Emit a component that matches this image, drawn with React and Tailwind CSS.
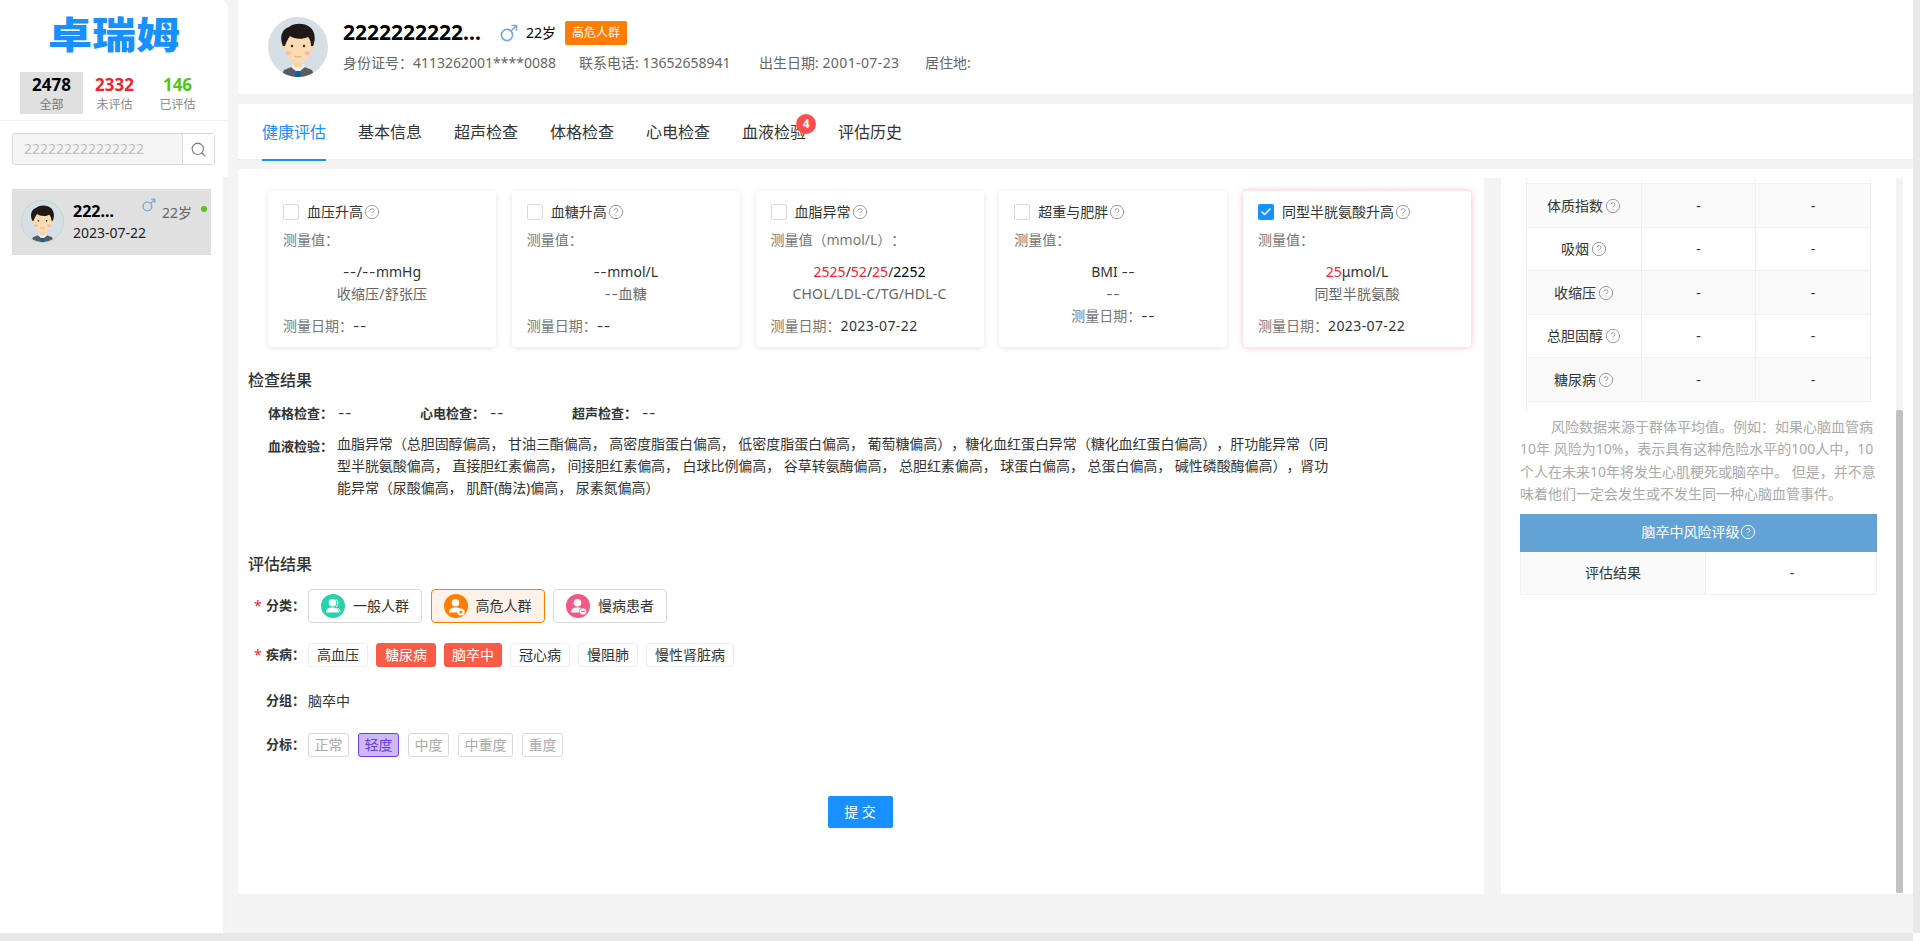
import React from "react";
import { CircleHelp, Search, Check } from "lucide-react";

function Avatar({ size, ring }) {
  const id = "av" + size;
  return (
    <svg width={size} height={size} viewBox="0 0 60 60" className={ring ? "shrink-0 rounded-full border border-[#b5dcc4]" : "shrink-0"}>
      <defs>
        <clipPath id={id}><circle cx="30" cy="30" r="30" /></clipPath>
      </defs>
      <g clipPath={`url(#${id})`}>
        <rect width="60" height="60" fill="#d6dfe5" />
        <path d="M13 60 L16 53 L26 49 H34 L44 53 L47 60 Z" fill="#565c61" />
        <path d="M23 50 L30 56 L37 50 L35 47 H25 Z" fill="#e9f1f6" />
        <path d="M28 54 L32 54 L33 60 L27 60 Z" fill="#0f5ca8" />
        <rect x="26" y="40" width="8" height="10" fill="#f6d3a6" />
        <circle cx="16.5" cy="29" r="3" fill="#f6d3a6" />
        <circle cx="43.5" cy="29" r="3" fill="#f6d3a6" />
        <path d="M17 24 C17 14 43 14 43 24 L43 31 C43 40 36 46 30 46 C24 46 17 40 17 31 Z" fill="#fbdcb2" />
        <path d="M15 29 C11 20 14 12 21 10 C27 5 38 6 43 11 C47 15 48 23 45 29 L43 29 C43 25 42 22 40 20 C34 23 26 22 22 19 C20 22 18 25 17 29 Z" fill="#1f1a18" />
        <circle cx="24" cy="29" r="1.2" fill="#2a2320" />
        <circle cx="36" cy="29" r="1.2" fill="#2a2320" />
        <ellipse cx="20.5" cy="36" rx="3" ry="1.9" fill="#f7b9b0" />
        <ellipse cx="39.5" cy="36" rx="3" ry="1.9" fill="#f7b9b0" />
        <path d="M26.5 39 Q30 41.5 33.5 39" stroke="#e2a27e" strokeWidth="1" fill="none" />
      </g>
    </svg>
  );
}

function Male({ size = 18 }) {
  return (
    <svg width={size} height={size} viewBox="0 0 18 18" fill="none" stroke="#7cabd3" strokeWidth="1.7" className="shrink-0">
      <circle cx="7" cy="11" r="5.6" />
      <path d="M11 7 L16.5 1.5 M11.5 1.5 H16.5 V6.5" />
    </svg>
  );
}

function Help({ className = "text-[#999]", size = 16 }) {
  return <CircleHelp size={size} strokeWidth={1.5} className={"shrink-0 " + className} />;
}

const Dash = () => <span className="font-['Inter',sans-serif] tracking-[0.5px]">--</span>;

function Card({ title, measure, value, sub, date, checked, centerDate }) {
  return (
    <div className={"w-[228px] h-[156px] shrink-0 rounded bg-white pt-[13px] px-[15px] " + (checked ? "shadow-[0_0_6px_rgba(255,120,120,0.5)]" : "shadow-[0_1px_6px_rgba(0,0,0,0.1)]")}>
      <div className="flex items-center h-4">
        {checked ? (
          <span className="w-4 h-4 rounded-[2px] bg-[#1890ff] flex items-center justify-center"><Check size={12} strokeWidth={3} className="text-white" /></span>
        ) : (
          <span className="w-4 h-4 rounded-[2px] border border-[#d9d9d9] bg-white"></span>
        )}
        <span className="ml-2 text-sm text-[#333] whitespace-nowrap">{title}</span>
        <Help className="text-[#999] ml-px" />
      </div>
      <div className="mt-[9px] text-sm leading-[22px] text-[#777] whitespace-nowrap">{measure}</div>
      <div className="mt-[10px] text-sm leading-[22px] text-[#333] text-center whitespace-nowrap">{value}</div>
      <div className="text-sm leading-[22px] text-[#666] text-center whitespace-nowrap tracking-[0.2px]">{sub}</div>
      <div className={"text-sm leading-[22px] text-[#777] whitespace-nowrap " + (centerDate ? "text-center" : "mt-[10px]")}>测量日期：<span className="text-[#333] tracking-[0.4px]">{date}</span></div>
    </div>
  );
}

const R = ({ children }) => <span className="text-[#f5222d]">{children}</span>;

const rows = [
  ["体质指数", "bg-[#fafafa]", "h-[44px]"],
  ["吸烟", "bg-white", "h-[43px]"],
  ["收缩压", "bg-[#fafafa]", "h-[44px]"],
  ["总胆固醇", "bg-white", "h-[43px]"],
  ["糖尿病", "bg-[#fafafa]", "h-[44px]"],
];

function PersonIcon({ bg, badge }) {
  return (
    <svg width="24" height="24" viewBox="0 0 24 24" className="shrink-0">
      <circle cx="12" cy="12" r="12" fill={bg} />
      <circle cx="11.5" cy="8.8" r="3.8" fill="#fff" />
      <path d="M5 18.5 C5 14.5 8 13.5 11.5 13.5 C15 13.5 18 14.5 18 18.5 Z" fill="#fff" />
      {badge === "line" && <path d="M15 5 Q18.5 9 15.5 13 M17 14 L19.5 18" stroke="#fff" strokeWidth="1" fill="none" />}
      {badge === "star" && <g><circle cx="17" cy="18" r="3.6" fill="#fff" /><path d="M17 15.9 L17.7 17.3 L19.2 17.5 L18.1 18.5 L18.4 20 L17 19.3 L15.6 20 L15.9 18.5 L14.8 17.5 L16.3 17.3 Z" fill={bg} /></g>}
      {badge === "minus" && <g><circle cx="17" cy="17.5" r="3.6" fill="#fff" stroke={bg} strokeWidth="0.8" /><path d="M15.2 17.5 H18.8" stroke={bg} strokeWidth="1.2" /></g>}
    </svg>
  );
}

function CatChip({ label, bg, badge, active }) {
  return (
    <div className={"w-[114px] h-[34px] rounded border flex items-center pl-[12px] gap-[8px] text-sm " + (active ? "border-[#ff7d00] bg-[#fff2e8] text-[#333]" : "border-[#d9d9d9] bg-white text-[#333]")}>
      <PersonIcon bg={bg} badge={badge} />
      <span className="whitespace-nowrap">{label}</span>
    </div>
  );
}

function DChip({ label, active, narrow }) {
  return (
    <span className={"h-[24px] rounded-[3px] flex items-center justify-center text-sm whitespace-nowrap border " + (narrow ? "w-[58px] " : "px-2 ") + (active ? "bg-[#f95c45] border-[#f95c45] text-white" : "bg-white border-[#f0f0f0] text-[#333]")}>{label}</span>
  );
}

function GChip({ label, active }) {
  return (
    <span className={"h-[24px] px-[5.5px] rounded-[3px] flex items-center text-sm whitespace-nowrap border " + (active ? "bg-[#cdb9f5] border-[#6b3fd6] text-[#6b3fd6]" : "bg-white border-[#d9d9d9] text-[#aaa]")}>{label}</span>
  );
}

function FormLabel({ star, children }) {
  return (
    <div className="flex items-center w-[60px] pl-[6px] shrink-0">
      <span className="w-[12px] text-[#f5222d] text-sm leading-none">{star ? "*" : ""}</span>
      <span className="text-[13px] font-bold text-[#333] whitespace-nowrap">{children}</span>
    </div>
  );
}

export default function App() {
  return (
    <div className="w-[1920px] h-[941px] overflow-hidden flex flex-col bg-[#f4f4f4] [text-spacing-trim:space-all] font-['Noto_Sans','Noto_Sans_CJK_SC',sans-serif]">
      <div className="flex h-[933px]">
        <aside className="w-[228px] shrink-0 bg-white rounded-tr-lg flex flex-col">
          <div className="h-[72px] flex justify-center pt-[9px]">
            <span className="text-[44px] leading-[48px] font-black text-[#1890ff] whitespace-nowrap scale-y-[0.85]">卓瑞姆</span>
          </div>
          <div className="flex pl-[20px] h-[42px]">
            <div className="w-[63px] bg-[#e0e0e0] flex flex-col items-center pt-[2px]">
              <span className="text-[17px] leading-[21px] font-bold text-black">2478</span>
              <span className="text-xs leading-[20px] text-[#777]">全部</span>
            </div>
            <div className="w-[63px] flex flex-col items-center pt-[2px]">
              <span className="text-[17px] leading-[21px] font-bold text-[#f5222d]">2332</span>
              <span className="text-xs leading-[20px] text-[#888]">未评估</span>
            </div>
            <div className="w-[63px] flex flex-col items-center pt-[2px]">
              <span className="text-[17px] leading-[21px] font-bold text-[#52c41a]">146</span>
              <span className="text-xs leading-[20px] text-[#888]">已评估</span>
            </div>
          </div>
          <div className="mt-[6px] h-px bg-[#f0f0f0]"></div>
          <div className="mt-[12px] ml-[12px] w-[203px] h-[32px] flex rounded-[3px] border border-[#d9d9d9] bg-[#f5f5f5]">
            <div className="flex-1 pl-[11px] text-sm leading-[30px] text-[#bfbfbf]">222222222222222</div>
            <div className="w-[32px] border-l border-[#d9d9d9] bg-white flex items-center justify-center">
              <Search size={17} strokeWidth={1.5} className="text-[#777]" />
            </div>
          </div>
          <div className="mt-[12px] flex-1 flex">
            <div className="w-[223px] pl-[12px] pt-[12px]">
              <div className="w-[199px] h-[66px] bg-[#e0e0e0] relative flex pl-[9px] pt-[11px]">
                <Avatar size={43} ring />
                <div className="ml-[9px] -mt-px flex flex-col">
                  <span className="text-base leading-[24px] font-bold text-black">222...</span>
                  <span className="text-sm leading-[20px] text-[#222]">2023-07-22</span>
                </div>
                <div className="absolute left-[130px] top-[9px]"><Male size={14} /></div>
                <span className="absolute left-[150px] top-[15px] text-sm leading-[18px] text-[#666]">22岁</span>
                <span className="absolute left-[189px] top-[17px] w-[6px] h-[6px] rounded-full bg-[#52c41a]"></span>
              </div>
            </div>
            <div className="w-[5px] bg-[#f3f3f3]"></div>
          </div>
        </aside>

        <main className="ml-[10px] w-[1675px] shrink-0 flex flex-col">
          <header className="h-[94px] bg-white flex items-start pl-[30px] pt-[17px]">
            <Avatar size={60} />
            <div className="ml-[15px]">
              <div className="flex items-center h-[30px] mt-px">
                <span className="text-[21px] font-bold text-black w-[157px] whitespace-nowrap">2222222222...</span>
                <Male size={18} />
                <span className="ml-2 text-sm text-black">22岁</span>
                <span className="ml-[9px] w-[62px] h-[24px] rounded-[2px] bg-[#ff7d00] text-white text-xs flex items-center justify-center">高危人群</span>
              </div>
              <div className="flex text-sm text-[#666] mt-[5px] leading-[20px] whitespace-nowrap">
                <span className="w-[236px]">身份证号：4113262001****0088</span>
                <span className="w-[180px]">联系电话: 13652658941</span>
                <span className="w-[166px]">出生日期: <span className="tracking-[0.4px]">2001-07-23</span></span>
                <span>居住地:</span>
              </div>
            </div>
          </header>

          <nav className="mt-[10px] h-[56px] bg-white border-b border-[#eeeeee] flex pl-[24px] gap-[32px] text-base text-[#333]">
            <div className="h-[57px] w-[64px] border-b-2 border-[#1890ff] text-[#1890ff] leading-[56px] whitespace-nowrap">健康评估</div>
            <div className="leading-[56px] whitespace-nowrap">基本信息</div>
            <div className="leading-[56px] whitespace-nowrap">超声检查</div>
            <div className="leading-[56px] whitespace-nowrap">体格检查</div>
            <div className="leading-[56px] whitespace-nowrap">心电检查</div>
            <div className="relative leading-[56px] whitespace-nowrap">
              血液检验
              <span className="absolute left-[54px] top-[10px] w-[20px] h-[20px] rounded-full bg-[#ff4d4f] text-white text-xs font-bold leading-[20px] text-center">4</span>
            </div>
            <div className="leading-[56px] whitespace-nowrap">评估历史</div>
          </nav>

          <div className="mt-[9px] h-[725px] bg-white pt-[9px] flex">
            <section className="w-[1246px] shrink-0 pt-[13px]">
              <div className="pl-[30px] flex gap-[15.75px]">
                <Card title="血压升高" measure="测量值：" value={<><Dash />/<Dash />mmHg</>} sub="收缩压/舒张压" date={<Dash />} />
                <Card title="血糖升高" measure="测量值：" value={<><Dash />mmol/L</>} sub={<><Dash />血糖</>} date={<Dash />} />
                <Card title="血脂异常" measure="测量值（mmol/L）：" value={<><R>2525</R>/<R>52</R>/<R>25</R>/<span className="text-black">2252</span></>} sub="CHOL/LDL-C/TG/HDL-C" date="2023-07-22" />
                <Card title="超重与肥胖" measure="测量值：" value={<>BMI <Dash /></>} sub={<Dash />} date={<Dash />} centerDate />
                <Card checked title="同型半胱氨酸升高" measure="测量值：" value={<><R>25</R>μmol/L</>} sub="同型半胱氨酸" date="2023-07-22" />
              </div>

              <h2 className="mt-[22px] ml-[10px] text-base leading-[22px] font-medium text-[#333]">检查结果</h2>
              <div className="mt-[11px] ml-[30px] flex leading-[22px]">
                <div className="w-[152px] flex"><span className="w-[70px] text-[13px] leading-[22px] font-bold text-[#333]">体格检查：</span><span className="text-sm leading-[22px] text-[#333]"><Dash /></span></div>
                <div className="w-[152px] flex"><span className="w-[70px] text-[13px] leading-[22px] font-bold text-[#333]">心电检查：</span><span className="text-sm leading-[22px] text-[#333]"><Dash /></span></div>
                <div className="w-[152px] flex"><span className="w-[70px] text-[13px] leading-[22px] font-bold text-[#333]">超声检查：</span><span className="text-sm leading-[22px] text-[#333]"><Dash /></span></div>
              </div>
              <div className="mt-[11px] ml-[30px] flex">
                <span className="w-[69px] shrink-0 text-[13px] font-bold leading-[22px] text-[#333]">血液检验：</span>
                <p className="w-[1000px] -mt-[2px] text-sm leading-[22px] tracking-[-0.05px] text-[#333]">
                  血脂异常（总胆固醇偏高， 甘油三酯偏高， 高密度脂蛋白偏高， 低密度脂蛋白偏高， 葡萄糖偏高），糖化血红蛋白异常（糖化血红蛋白偏高），肝功能异常（同型半胱氨酸偏高， 直接胆红素偏高， 间接胆红素偏高， 白球比例偏高， 谷草转氨酶偏高， 总胆红素偏高， 球蛋白偏高， 总蛋白偏高， 碱性磷酸酶偏高），肾功能异常（尿酸偏高， 肌酐(酶法)偏高， 尿素氮偏高）
                </p>
              </div>

              <h2 className="mt-[54px] ml-[10px] text-base leading-[22px] font-medium text-[#333]">评估结果</h2>
              <div className="mt-[14px] ml-[10px] flex items-center">
                <FormLabel star>分类：</FormLabel>
                <div className="flex gap-[8.5px]">
                  <CatChip label="一般人群" bg="#26d4ab" badge="line" />
                  <CatChip label="高危人群" bg="#ff7d00" badge="star" active />
                  <CatChip label="慢病患者" bg="#f25a85" badge="minus" />
                </div>
              </div>
              <div className="mt-[20px] ml-[10px] flex items-center">
                <FormLabel star>疾病：</FormLabel>
                <div className="flex gap-[8px]">
                  <DChip label="高血压" />
                  <DChip label="糖尿病" active />
                  <DChip label="脑卒中" active narrow />
                  <DChip label="冠心病" />
                  <DChip label="慢阻肺" />
                  <DChip label="慢性肾脏病" />
                </div>
              </div>
              <div className="mt-[22px] ml-[10px] flex items-center h-[24px]">
                <FormLabel>分组：</FormLabel>
                <span className="text-sm text-[#333]">脑卒中</span>
              </div>
              <div className="mt-[20px] ml-[10px] flex items-center">
                <FormLabel>分标：</FormLabel>
                <div className="flex gap-[9px]">
                  <GChip label="正常" />
                  <GChip label="轻度" active />
                  <GChip label="中度" />
                  <GChip label="中重度" />
                  <GChip label="重度" />
                </div>
              </div>
              <div className="mt-[39px] flex justify-center pr-[2px]">
                <button className="w-[65px] h-[32px] rounded-[2px] bg-[#1890ff] text-white text-sm">提 交</button>
              </div>
            </section>

            <div className="w-[17px] shrink-0 bg-[#f4f4f4]"></div>

            <section className="w-[412px] shrink-0 flex">
              <div className="w-[395px] shrink-0">
                <div className="ml-[25px] w-[345px] border-l border-[#f0f0f0] pb-[9px]">
                  <div className="grid grid-cols-[115px_114px_115px] h-[5px] border-b border-[#f0f0f0] box-content">
                    <div className="border-r border-[#f0f0f0]"></div>
                    <div className="border-r border-[#f0f0f0]"></div>
                    <div className="border-r border-[#f0f0f0]"></div>
                  </div>
                  {rows.map(([label, bg, h]) => (
                    <div key={label} className={"grid grid-cols-[115px_114px_115px] border-b border-[#f0f0f0] text-sm text-[#333] " + bg + " " + h}>
                      <div className="border-r border-[#f0f0f0] flex items-center justify-center gap-[2px]">{label}<Help /></div>
                      <div className="border-r border-[#f0f0f0] flex items-center justify-center">-</div>
                      <div className="border-r border-[#f0f0f0] flex items-center justify-center">-</div>
                    </div>
                  ))}
                </div>
                <p className="mt-[5px] ml-[19px] w-[357px] text-sm leading-[22.4px] text-[#aaa] indent-[31px]">
                  风险数据来源于群体平均值。例如：如果心脑血管病10年 风险为10%，表示具有这种危险水平的100人中，10个人在未来10年将发生心肌梗死或脑卒中。 但是，并不意味着他们一定会发生或不发生同一种心脑血管事件。
                </p>
                <div className="mt-[8px] ml-[19px] w-[357px] h-[38px] bg-[#62a2d5] text-white text-sm flex items-center justify-center pb-[2px]">
                  脑卒中风险评级<Help className="text-white" />
                </div>
                <div className="ml-[19px] w-[357px] h-[43px] grid grid-cols-[185px_172px] border-x border-b border-[#f0f0f0] text-sm text-[#333]">
                  <div className="bg-[#fafafa] border-r border-[#f0f0f0] flex items-center justify-center">评估结果</div>
                  <div className="flex items-center justify-center">-</div>
                </div>
              </div>
              <div className="w-[7px] shrink-0 flex flex-col pb-px">
                <div className="h-[232px] bg-[#f3f3f3]"></div>
                <div className="flex-1 bg-[#c1c1c1] rounded-[2px]"></div>
              </div>
            </section>
          </div>
        </main>

        <div className="w-[7px] shrink-0 bg-[#e8e8e8]"></div>
      </div>
      <div className="flex h-[8px]">
        <div className="w-[1913px] bg-[#e8e8e8]"></div>
        <div className="flex-1 bg-white"></div>
      </div>
    </div>
  );
}
